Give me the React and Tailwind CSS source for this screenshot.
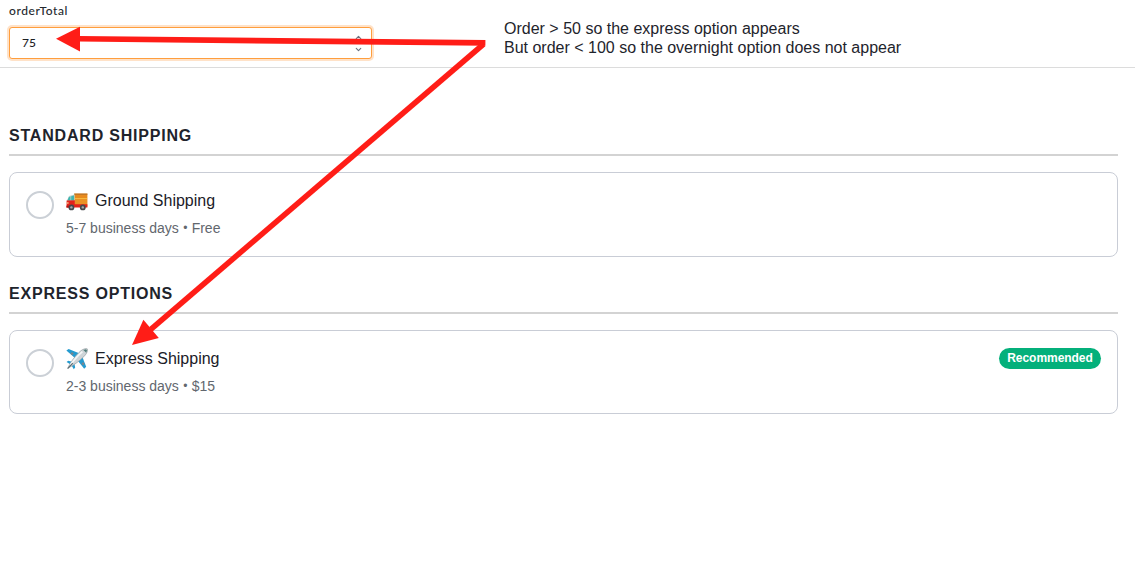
import React, { useState } from "react";
import { ChevronDown, ChevronUp } from "lucide-react";

/* icons */
function TruckIcon() {
  return (
    <svg width="22" height="18" viewBox="0 0 22 18" className="relative top-px block">
      <path d="M8.2 .6h13.2v13H8.2z" fill="#e88a1d" />
      <path d="M8.2 .6h13.2v1.2H8.2z" fill="#b8722a" />
      <path d="M9 5h12v1H9z" fill="#f6b93f" />
      <path d="M9 6h12v5H9z" fill="#ea9226" />
      <path d="M3 3 8.6 1.4v6.4L.8 8z" fill="#b9cfc9" />
      <path d="M2.8 4.2 4.4 3.6v4H1.4zM5.2 3.3l2.8-.7v4.8H5.2z" fill="#3fb5b0" />
      <path d="M.6 7.6 8.8 7.2v4h12.6v3.2H.6z" fill="#e3231b" />
      <path d="M.4 12.6h3v2h-3z" fill="#b8150f" />
      <path d="M.8 9.4h1.8v1.2H.8z" fill="#fbe3a0" />
      <circle cx="5.4" cy="14.4" r="2.9" fill="#47484d" />
      <circle cx="5.4" cy="14.4" r="1.2" fill="#a5a8ad" />
      <circle cx="16.8" cy="14.4" r="2.9" fill="#47484d" />
      <circle cx="16.8" cy="14.4" r="1.2" fill="#a5a8ad" />
    </svg>
  );
}

function PlaneIcon() {
  return (
    <svg width="22" height="22" viewBox="0 0 22 22" className="block">
      <path d="M.4 2.6 2.6 1 14.4 5.8 10 11z" fill="#249bd0" />
      <path d="m20.2 18.8-2 2L10.8 11.6l4.8-4.6z" fill="#249bd0" />
      <path d="M.6 14 2.2 12.8 7.8 14.2 5.4 17zM7.8 21.2l1.4-1.6L8 13.8 5 16.4z" fill="#249bd0" />
      <path d="m4.4 5.8 1.6-1.8 1.8 1.6-1.6 1.6zM15.4 15.8l1.8-1.8 1.2 1.8-1.4 1.6z" fill="#7d868c" />
      <path d="M2 20C4 14.6 9.8 7 14.8 2.8 17.2 .8 20.4 .2 21.3 .9c.7.9 0 3.7-2 6.1C15 12 7.6 17.6 2 20Z" fill="#cfd5d8" stroke="#8b969b" strokeWidth=".6" />
      <path d="M4.2 17C8 12 12.4 7 16.4 3.6" stroke="#f4f6f7" strokeWidth="1.8" fill="none" />
      <path d="m17.4 2 2.8 2.8.8-2.6-1-1z" fill="#4f7d78" />
      <path d="M1.6 20.6 6.8 15.2" stroke="#5c6a70" strokeWidth="1.2" />
    </svg>
  );
}

function Arrows() {
  return (
    <svg width="500" height="360" viewBox="0 0 500 360" className="pointer-events-none absolute left-0 top-0" fill="#ff1d17">
      <path d="M79 36 485.4 40 485.4 45.8 79 41.6z" />
      <path d="M56 38.8 80 26.8v24.6z" />
      <path d="M481.4 42.2 485.4 46.2 152.6 331.4 149 327.2z" />
      <path d="m132 345 11.4-25.2 15.4 18.2z" />
    </svg>
  );
}

function OrderTotal({ value, onChange }) {
  return (
    <label className="block w-[363px]">
      <span className="block h-[21px] pt-[3px] font-['Lato',sans-serif] text-[12px] font-medium leading-4 tracking-[0.6px] text-[#24282e]">orderTotal</span>
      <div className="mt-[6px] flex h-8 items-center justify-between rounded-[3px] border border-[#ff9e3d] bg-white pl-3 pr-2 shadow-[0_0_0_2px_#ffe2c8]">
        <input
          value={value}
          onChange={(e) => onChange(e.target.value)}
          className="w-40 bg-transparent font-['Lato',sans-serif] text-[12px] font-medium text-[#1c2024] outline-none"
        />
        <div className="flex flex-col gap-[3px] text-gray-500">
          <ChevronUp size={9} strokeWidth={3} />
          <ChevronDown size={9} strokeWidth={3} />
        </div>
      </div>
    </label>
  );
}

function ShippingOption({ icon, title, time, price, badge }) {
  return (
    <div className="mt-4 flex items-start rounded-lg border border-[#c9cdd6] px-4 pb-[17.6px] pt-[18px]">
      <span className="h-7 w-7 shrink-0 rounded-full border-2 border-[#cbd0d6]" />
      <div className="ml-3 flex-1">
        <div className="-mt-[2px] flex h-6 items-center">
          <span className="w-[29px]">{icon}</span>
          <span className="text-[16px] leading-6 text-[#1b2028]">{title}</span>
        </div>
        <div className="mt-[5px] text-[14px] leading-5 text-[#62676e]">
          {time} <span className="inline-block w-[5px] text-center align-[1px] text-[12px] leading-none">•</span> {price}
        </div>
      </div>
      {badge && (
        <span className="-mt-[1px] flex h-[21px] w-[102px] items-center justify-center rounded-full bg-[#04b07b] pb-[1px] text-[12px] font-bold tracking-[-0.05px] text-white">
          {badge}
        </span>
      )}
    </div>
  );
}

function ShippingGroup({ title, children }) {
  return (
    <section className="mb-[25.2px]">
      <h2 className="h-8 border-b-2 border-[#d3d3d3] text-[16px] font-bold leading-6 tracking-[0.8px] text-[#1e242c]">{title}</h2>
      {children}
    </section>
  );
}

export default function App() {
  const [total, setTotal] = useState("75");

  return (
    <div className="relative min-h-screen bg-white font-['Liberation_Sans',Arial,sans-serif]">
      <header className="flex h-[68px] items-start border-b border-[#dcdcdc] pl-[9px]">
        <OrderTotal value={total} onChange={setTotal} />
        <p className="ml-[132px] mt-[19px] whitespace-nowrap text-[16px] leading-[19px] text-[#1e242c]">
          Order &gt; 50 so the express option appears
          <br />
          But order &lt; 100 so the overnight option does not appear
        </p>
      </header>

      <main className="pl-[9px] pr-[17px] pt-14">
        <ShippingGroup title="STANDARD SHIPPING">
          <ShippingOption icon={<TruckIcon />} title="Ground Shipping" time="5-7 business days" price="Free" />
        </ShippingGroup>
        <ShippingGroup title="EXPRESS OPTIONS">
          <ShippingOption icon={<PlaneIcon />} title="Express Shipping" time="2-3 business days" price="$15" badge="Recommended" />
        </ShippingGroup>
      </main>

      <Arrows />
    </div>
  );
}
